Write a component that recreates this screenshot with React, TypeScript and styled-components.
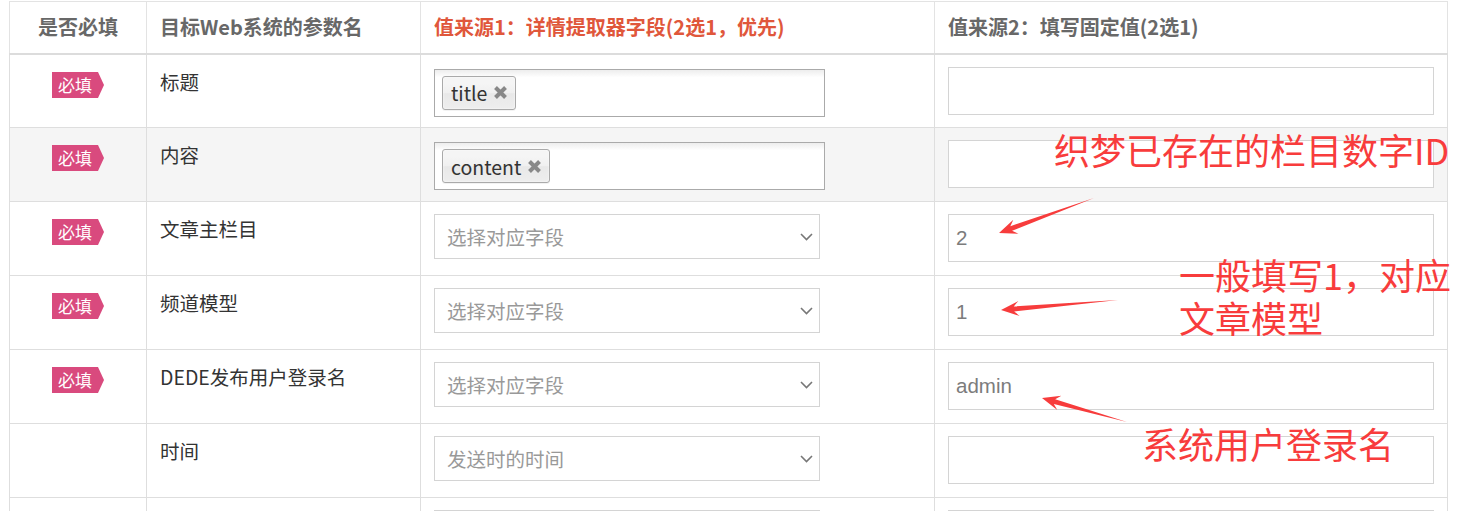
import React from 'react';
import styled, { createGlobalStyle } from 'styled-components';

const GlobalStyle = createGlobalStyle`
  html, body {
    margin: 0;
    padding: 0;
    background: #fff;
  }
  body {
    font-family: "Microsoft YaHei", "Noto Sans CJK SC", "Noto Sans", sans-serif;
  }
`;

type Source = { kind: 'tags'; tags: string[] } | { kind: 'select'; text: string };

type FieldRow = {
  required?: boolean;
  name: string;
  source: Source;
  value: string;
  shaded?: boolean;
};

const rows: FieldRow[] = [
  { required: true, name: '标题', source: { kind: 'tags', tags: ['title'] }, value: '' },
  { required: true, name: '内容', source: { kind: 'tags', tags: ['content'] }, value: '', shaded: true },
  { required: true, name: '文章主栏目', source: { kind: 'select', text: '选择对应字段' }, value: '2' },
  { required: true, name: '频道模型', source: { kind: 'select', text: '选择对应字段' }, value: '1' },
  { required: true, name: 'DEDE发布用户登录名', source: { kind: 'select', text: '选择对应字段' }, value: 'admin' },
  { name: '时间', source: { kind: 'select', text: '发送时的时间' }, value: '' },
  { name: '', source: { kind: 'select', text: '选择对应字段' }, value: '' },
];

// tail -> tip, in page pixels
const arrows = [
  { tx: 1094, ty: 198, hx: 999, hy: 233 },
  { tx: 1118, ty: 300, hx: 1001, hy: 310 },
  { tx: 1127, ty: 422, hx: 1042, hy: 398 },
];

const arrowPoints = (tx: number, ty: number, hx: number, hy: number) => {
  const dx = hx - tx;
  const dy = hy - ty;
  const len = Math.hypot(dx, dy);
  const ux = dx / len;
  const uy = dy / len;
  const nx = -uy;
  const ny = ux;
  const neck = 13;
  const head = 18;
  const shaft = 2.5;
  const barb = 7.5;
  const p = (along: number, side: number) =>
    `${hx - ux * along + nx * side},${hy - uy * along + ny * side}`;
  return [`${tx},${ty}`, p(neck, shaft), p(head, barb), `${hx},${hy}`, p(head, -barb), p(neck, -shaft)].join(' ');
};

const App = () => {
  return (
    <>
      <GlobalStyle />
      <Page>
        <Table>
          <colgroup>
            <col style={{ width: 137 }} />
            <col style={{ width: 274 }} />
            <col style={{ width: 514 }} />
            <col style={{ width: 513 }} />
          </colgroup>
          <thead>
            <tr>
              <Th $center>是否必填</Th>
              <Th>目标Web系统的参数名</Th>
              <Th $accent>值来源1：详情提取器字段(2选1，优先)</Th>
              <Th>值来源2：填写固定值(2选1)</Th>
            </tr>
          </thead>
          <tbody>
            {rows.map((row, i) => (
              <Tr key={i} $shaded={row.shaded}>
                <Td $center>{row.required && <Badge>必填</Badge>}</Td>
                <Td>
                  <Name>{row.name}</Name>
                </Td>
                <Td>
                  {row.source.kind === 'tags' ? (
                    <TagBox>
                      {row.source.tags.map((t) => (
                        <Tag key={t}>
                          {t}
                          <svg width="15" height="15" viewBox="0 0 15 15">
                            <path d="M2.5 2.5 L12.5 12.5 M12.5 2.5 L2.5 12.5" stroke="#888" strokeWidth="4" />
                          </svg>
                        </Tag>
                      ))}
                    </TagBox>
                  ) : (
                    <Select>
                      {row.source.text}
                      <svg width="13" height="8" viewBox="0 0 13 8">
                        <path d="M1 1 L6.5 6.5 L12 1" fill="none" stroke="#777" strokeWidth="1.6" />
                      </svg>
                    </Select>
                  )}
                </Td>
                <Td>
                  <Input>{row.value}</Input>
                </Td>
              </Tr>
            ))}
          </tbody>
        </Table>

        <Overlay width="1484" height="511">
          {arrows.map((a, i) => (
            <polygon key={i} points={arrowPoints(a.tx, a.ty, a.hx, a.hy)} fill="#f73c3c" />
          ))}
        </Overlay>
        <Note $x={1054} $y={128}>织梦已存在的栏目数字ID</Note>
        <Note $x={1179} $y={253}>
          一般填写1，对应
          <br />
          文章模型
        </Note>
        <Note $x={1142} $y={422}>系统用户登录名</Note>
      </Page>
    </>
  );
};

export default App;

const Page = styled.div`
  position: relative;
  width: 1484px;
  height: 511px;
  overflow: hidden;
  padding: 1px 0 0 9px;
  box-sizing: border-box;
`;

const Table = styled.table`
  width: 1438px;
  table-layout: fixed;
  border-collapse: collapse;
  border: 1px solid #ddd;
`;

const Th = styled.th<{ $center?: boolean; $accent?: boolean }>`
  height: 52px;
  padding: 0 13px 1px;
  box-sizing: border-box;
  border: 1px solid #e3e3e3;
  border-bottom: 2px solid #dcdcdc;
  text-align: ${(p) => (p.$center ? 'center' : 'left')};
  font-size: 20px;
  font-weight: bold;
  color: ${(p) => (p.$accent ? '#e0573b' : '#686868')};
  white-space: nowrap;
`;

const Tr = styled.tr<{ $shaded?: boolean }>`
  background: ${(p) => (p.$shaded ? '#f5f5f5' : '#fff')};
`;

const Td = styled.td<{ $center?: boolean }>`
  height: 74px;
  padding: 12px 13px 0;
  box-sizing: border-box;
  vertical-align: top;
  border: 1px solid #dedede;
  text-align: ${(p) => (p.$center ? 'center' : 'left')};
`;

const Badge = styled.span`
  position: relative;
  display: inline-block;
  margin: 5px 6px 0 0;
  height: 26px;
  line-height: 26px;
  padding: 0 6px;
  background: #d94a7e;
  color: #fff;
  font-size: 17px;

  &::after {
    content: '';
    position: absolute;
    top: 0;
    right: -6px;
    border-left: 6px solid #d94a7e;
    border-top: 13px solid transparent;
    border-bottom: 13px solid transparent;
  }
`;

const Name = styled.div`
  margin-top: 1px;
  font-size: 19.5px;
  line-height: 28px;
  color: #333;
`;

const TagBox = styled.div`
  display: flex;
  align-items: flex-start;
  width: 391px;
  height: 48px;
  margin-top: 2px;
  padding: 6px 7px;
  box-sizing: border-box;
  border: 1px solid #aaa;
  background: linear-gradient(#eee 1%, #fff 16%);
`;

const Tag = styled.span`
  display: inline-flex;
  align-items: center;
  gap: 6px;
  height: 34px;
  padding: 0 7px 0 8px;
  box-sizing: border-box;
  border: 1px solid #aaa;
  border-radius: 3px;
  background: linear-gradient(#f5f5f5 20%, #f0f0f0 50%, #e8e8e8 52%, #eee 100%);
  box-shadow: 0 0 2px #fff inset, 0 1px 0 rgba(0, 0, 0, 0.05);
  color: #333;
  font-size: 19.5px;
`;

const Select = styled.div`
  display: flex;
  align-items: center;
  justify-content: space-between;
  width: 386px;
  height: 45px;
  padding: 0 6px 0 12px;
  box-sizing: border-box;
  border: 1px solid #d4d4d4;
  background: #fff;
  color: #999;
  font-size: 19.5px;
`;

const Input = styled.div`
  display: flex;
  align-items: center;
  width: 100%;
  height: 48px;
  padding: 0 12px 0 7px;
  box-sizing: border-box;
  border: 1px solid #d4d4d4;
  background: #fff;
  color: #7c7c7c;
  font-size: 20.5px;
  font-family: "Liberation Sans", "Noto Sans CJK SC", sans-serif;
`;

const Overlay = styled.svg`
  position: absolute;
  left: 0;
  top: 0;
  pointer-events: none;
`;

const Note = styled.div<{ $x: number; $y: number }>`
  position: absolute;
  left: ${(p) => p.$x}px;
  top: ${(p) => p.$y}px;
  font-size: 36px;
  line-height: 43px;
  color: #f83c3c;
  white-space: nowrap;
`;
